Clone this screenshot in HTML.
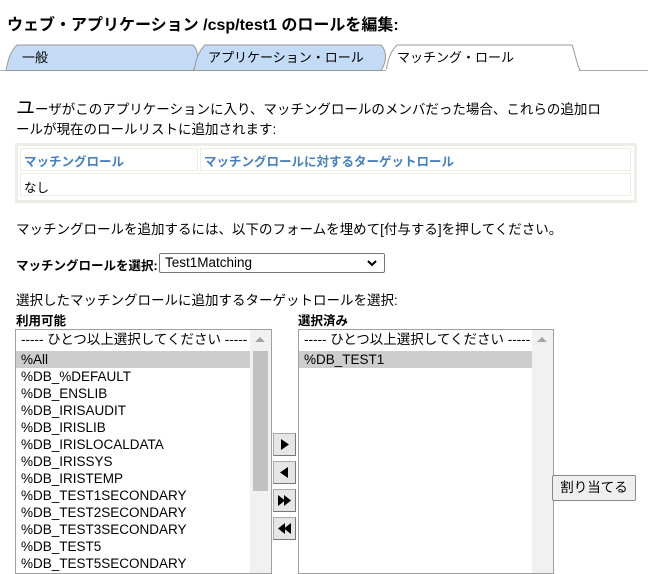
<!DOCTYPE html>
<html><head><meta charset="utf-8"><style>
*{margin:0;padding:0;box-sizing:border-box}
body{width:648px;height:569px;overflow:hidden;background:#fff;font-family:"Liberation Sans","Noto Sans CJK JP",sans-serif;color:#000;position:relative;font-size:13px}
.a{position:absolute;white-space:nowrap}
.lst{position:absolute;border:1px solid #a0a0a0;background:#fff;overflow:hidden}
.it{height:17px;line-height:17px;padding-left:5px;font-size:13.5px}
.hd{height:21px;line-height:19px}
.sel{background:#cdcdcd}
.btn{position:absolute;left:273px;width:23px;height:23px;background:#e6e6e6;border:1px solid #aaa;border-right-color:#777;border-bottom-color:#777}
</style></head><body>
<div class="a" style="left:7px;top:11px;font-size:16px;font-weight:bold">ウェブ・アプリケーション /csp/test1 のロールを編集:</div>
<svg class="a" style="left:0;top:40px" width="648" height="34">
<line x1="0" y1="30.5" x2="648" y2="30.5" stroke="#aaa"/>
<path d="M6 30.5 C8 20,10 12,17 5 L193 5 C198 10,200 20,193 30.5 Z" fill="#c3dbf5" stroke="#999"/>
<path d="M194 30.5 C196 20,198 12,205 5 L381 5 C386 10,388 20,381 30.5 Z" fill="#c3dbf5" stroke="#999"/>
<path d="M386 31 C388 20,390 12,397 5 L572 5 C575 12,576 22,580 30.5" fill="#fff" stroke="#999"/>
<rect x="386" y="29" width="192" height="3" fill="#fff"/>
</svg>
<div class="a" style="left:22px;top:47px;font-size:13px">一般</div>
<div class="a" style="left:208px;top:47px;font-size:13px">アプリケーション・ロール</div>
<div class="a" style="left:397px;top:47px;font-size:13px">マッチング・ロール</div>
<div class="a" style="left:16px;top:93px;font-size:13.5px"><span style="font-size:19px">ユ</span>ーザがこのアプリケーションに入り、マッチングロールのメンバだった場合、これらの追加ロ</div>
<div class="a" style="left:16px;top:118px;font-size:13.5px">ールが現在のロールリストに追加されます:</div>
<div class="a" style="left:15px;top:143px;width:622px;height:60px;border:3px solid #eeeee8"></div>
<div class="a" style="left:20px;top:148px;width:178px;height:23px;border:1px solid #eeeee8"></div>
<div class="a" style="left:200px;top:148px;width:431px;height:23px;border:1px solid #eeeee8"></div>
<div class="a" style="left:20px;top:173px;width:611px;height:23px;border:1px solid #eeeee8"></div>
<div class="a" style="left:24px;top:151px;font-size:12.5px;font-weight:bold;color:#4a7fb8">マッチングロール</div>
<div class="a" style="left:204px;top:151px;font-size:12.5px;font-weight:bold;color:#4a7fb8">マッチングロールに対するターゲットロール</div>
<div class="a" style="left:24px;top:177px;font-size:12.5px">なし</div>
<div class="a" style="left:16px;top:218px;font-size:13.5px">マッチングロールを追加するには、以下のフォームを埋めて[付与する]を押してください。</div>
<div class="a" style="left:16px;top:255px;font-size:12.5px;font-weight:bold">マッチングロールを選択:</div>
<div class="a" style="left:159px;top:253px;width:226px;height:20px;border:1px solid #767676;border-radius:2px;padding-left:5px;line-height:18px;font-size:13.5px">Test1Matching<svg style="position:absolute;right:7px;top:6px" width="10" height="7"><path d="M1 1 L5 5 L9 1" fill="none" stroke="#000" stroke-width="2"/></svg></div>
<div class="a" style="left:16px;top:289px;font-size:13.5px">選択したマッチングロールに追加するターゲットロールを選択:</div>
<div class="a" style="left:16px;top:310px;font-size:12.5px;font-weight:bold">利用可能</div>
<div class="a" style="left:298px;top:310px;font-size:12.5px;font-weight:bold">選択済み</div>
<div class="lst" style="left:15px;top:329px;width:257px;height:245px">
<div style="position:absolute;right:0;top:0;width:21px;height:100%;background:#f1f1f1"></div>
<div style="position:absolute;right:3px;top:21px;width:15px;height:140px;background:#c1c1c1"></div>
<div style="position:absolute;right:6px;top:7px;width:0;height:0;border-left:5px solid transparent;border-right:5px solid transparent;border-bottom:5px solid #a3a3a3"></div>
<div style="width:234px">
<div class="it hd">----- ひとつ以上選択してください -----</div>
<div class="it sel">%All</div>
<div class="it">%DB_%DEFAULT</div>
<div class="it">%DB_ENSLIB</div>
<div class="it">%DB_IRISAUDIT</div>
<div class="it">%DB_IRISLIB</div>
<div class="it">%DB_IRISLOCALDATA</div>
<div class="it">%DB_IRISSYS</div>
<div class="it">%DB_IRISTEMP</div>
<div class="it">%DB_TEST1SECONDARY</div>
<div class="it">%DB_TEST2SECONDARY</div>
<div class="it">%DB_TEST3SECONDARY</div>
<div class="it">%DB_TEST5</div>
<div class="it">%DB_TEST5SECONDARY</div>
</div></div>
<div class="lst" style="left:298px;top:329px;width:256px;height:245px">
<div style="position:absolute;right:0;top:0;width:21px;height:100%;background:#f1f1f1"></div>
<div style="position:absolute;right:6px;top:7px;width:0;height:0;border-left:5px solid transparent;border-right:5px solid transparent;border-bottom:5px solid #a3a3a3"></div>
<div style="width:233px">
<div class="it hd">----- ひとつ以上選択してください -----</div>
<div class="it sel">%DB_TEST1</div>
</div></div>
<div class="btn" style="top:433px"><svg width="21" height="21"><path d="M7 5 L15 10.5 L7 16Z"/></svg></div>
<div class="btn" style="top:461px"><svg width="21" height="21"><path d="M14 5 L6 10.5 L14 16Z"/></svg></div>
<div class="btn" style="top:489px"><svg width="21" height="21"><path d="M4 5 L11 10.5 L4 16Z M10 5 L17 10.5 L10 16Z"/></svg></div>
<div class="btn" style="top:517px"><svg width="21" height="21"><path d="M17 5 L10 10.5 L17 16Z M11 5 L4 10.5 L11 16Z"/></svg></div>
<div class="a" style="left:552px;top:475px;width:84px;height:26px;border:1px solid #888;border-radius:2px;background:#efefef;text-align:center;line-height:24px;font-size:13.5px">割り当てる</div>
</body></html>
